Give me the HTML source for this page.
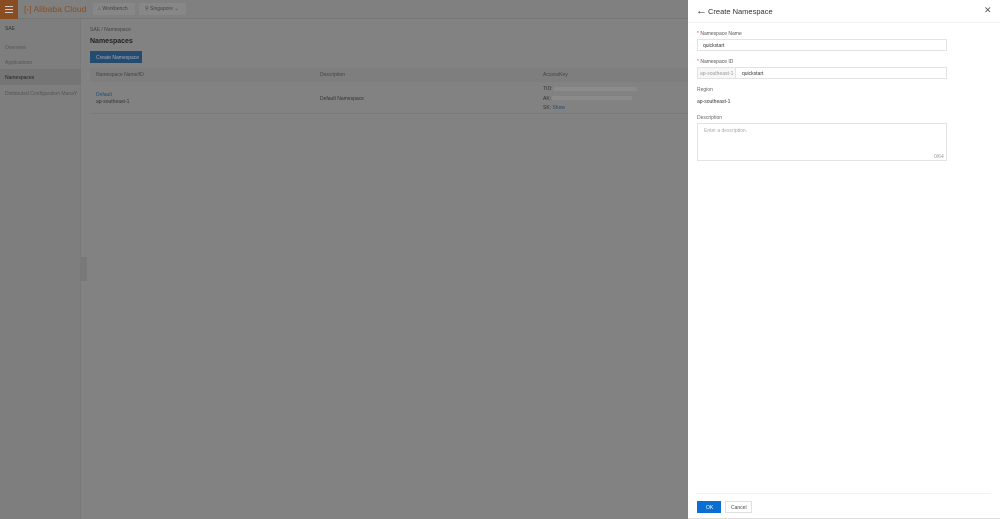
<!DOCTYPE html><html><head><meta charset="utf-8"><style>
*{box-sizing:border-box;margin:0;padding:0}
body{width:1000px;height:519px;overflow:hidden;font-family:"Liberation Sans",sans-serif;background:#828282;position:relative;font-size:5px;color:#222}
.a{position:absolute;white-space:nowrap}
</style></head><body>
<div class="a" style="left:0;top:0;width:1000px;height:19px;background:#808080;border-bottom:1px solid #777"></div>
<div class="a" style="left:0;top:0;width:18px;height:19px;background:#8a4d22"></div>
<div class="a" style="left:5px;top:6px;width:8px;height:1px;background:#ccc;box-shadow:0 3px 0 #ccc,0 6px 0 #ccc"></div>
<div class="a" style="left:24px;top:4px;font-size:8.5px;color:#8a4d22">[-] Alibaba Cloud</div>
<div class="a" style="left:93px;top:3px;width:42px;height:12px;background:#878787"></div>
<div class="a" style="left:98px;top:6px;color:#444">⌂ Workbench</div>
<div class="a" style="left:139px;top:3px;width:47px;height:12px;background:#878787"></div>
<div class="a" style="left:145px;top:6px;color:#444">⚲ Singapore ⌄</div>
<div class="a" style="left:0;top:19px;width:81px;height:500px;background:#7e7e7e;border-right:1px solid #7a7a7a"></div>
<div class="a" style="left:5px;top:26px;color:#333">SAE</div>
<div class="a" style="left:5px;top:45px;color:#555">Overview</div>
<div class="a" style="left:5px;top:60px;color:#555">Applications</div>
<div class="a" style="left:0;top:69px;width:81px;height:16px;background:#757575"></div>
<div class="a" style="left:5px;top:75px;color:#222">Namespaces</div>
<div class="a" style="left:5px;top:91px;color:#555">Distributed Configuration ManaY</div>
<div class="a" style="left:81px;top:257px;width:6px;height:24px;background:#797979"></div>
<div class="a" style="left:90px;top:27px;color:#444">SAE / Namespace</div>
<div class="a" style="left:90px;top:38px;font-size:7px;font-weight:bold;color:#222">Namespaces</div>
<div class="a" style="left:90px;top:51px;width:52px;height:12px;background:#234c6f"></div>
<div class="a" style="left:96px;top:55px;color:#aab">Create Namespace</div>
<div class="a" style="left:90px;top:68px;width:598px;height:14px;background:#7e7e7e"></div>
<div class="a" style="left:96px;top:72px;color:#444">Namespace Name/ID</div>
<div class="a" style="left:320px;top:72px;color:#444">Description</div>
<div class="a" style="left:543px;top:72px;color:#444">AccessKey</div>
<div class="a" style="left:96px;top:92px;color:#234c6f">Default</div>
<div class="a" style="left:96px;top:99px;color:#333">ap-southeast-1</div>
<div class="a" style="left:320px;top:96px;color:#333">Default Namespace</div>
<div class="a" style="left:543px;top:86px;color:#333">TID:</div><div class="a" style="left:554px;top:87px;width:83px;height:4px;background:#8b8b8b"></div>
<div class="a" style="left:543px;top:96px;color:#333">AK:</div><div class="a" style="left:552px;top:96px;width:80px;height:4px;background:#8b8b8b"></div>
<div class="a" style="left:543px;top:105px;color:#333">SK: <span style="color:#234c6f">Show</span></div>
<div class="a" style="left:90px;top:113px;width:598px;height:1px;background:#7a7a7a"></div>
<div class="a" style="left:688px;top:0;width:312px;height:519px;background:#fff;border-bottom:1px solid #ddd">
<div class="a" style="left:8px;top:5px;font-size:11px;color:#333">←</div>
<div class="a" style="left:20px;top:7px;font-size:7.5px;color:#333">Create Namespace</div>
<div class="a" style="left:296px;top:5px;font-size:9px;color:#555">✕</div>
<div class="a" style="left:0;top:22px;width:312px;height:1px;background:#f0f0f0"></div>
<div class="a" style="left:9px;top:31px;color:#555"><span style="color:#e33">*</span> Namespace Name</div>
<div class="a" style="left:9px;top:39px;width:250px;height:12px;border:1px solid #e3e3e3"></div>
<div class="a" style="left:15px;top:43px;color:#333">quickstart</div>
<div class="a" style="left:9px;top:59px;color:#555"><span style="color:#e33">*</span> Namespace ID</div>
<div class="a" style="left:9px;top:67px;width:250px;height:12px;border:1px solid #e3e3e3"></div>
<div class="a" style="left:10px;top:68px;width:38px;height:10px;background:#f7f7f7;border-right:1px solid #e3e3e3"></div>
<div class="a" style="left:12px;top:71px;color:#999">ap-southeast-1</div>
<div class="a" style="left:54px;top:71px;color:#333">quickstart</div>
<div class="a" style="left:9px;top:87px;color:#666">Region</div>
<div class="a" style="left:9px;top:99px;color:#333">ap-southeast-1</div>
<div class="a" style="left:9px;top:115px;color:#666">Description</div>
<div class="a" style="left:9px;top:123px;width:250px;height:38px;border:1px solid #e3e3e3"></div>
<div class="a" style="left:16px;top:128px;color:#aaa">Enter a description.</div>
<div class="a" style="left:246px;top:154px;color:#999">0/64</div>
<div class="a" style="left:8px;top:493px;width:295px;height:1px;background:#f2f2f2"></div>
<div class="a" style="left:9px;top:501px;width:24px;height:12px;background:#0a6fd1"></div>
<div class="a" style="left:18px;top:505px;color:#fff">OK</div>
<div class="a" style="left:37px;top:501px;width:27px;height:12px;border:1px solid #e0e0e0"></div>
<div class="a" style="left:43px;top:505px;color:#444">Cancel</div>
</div>
</body></html>
